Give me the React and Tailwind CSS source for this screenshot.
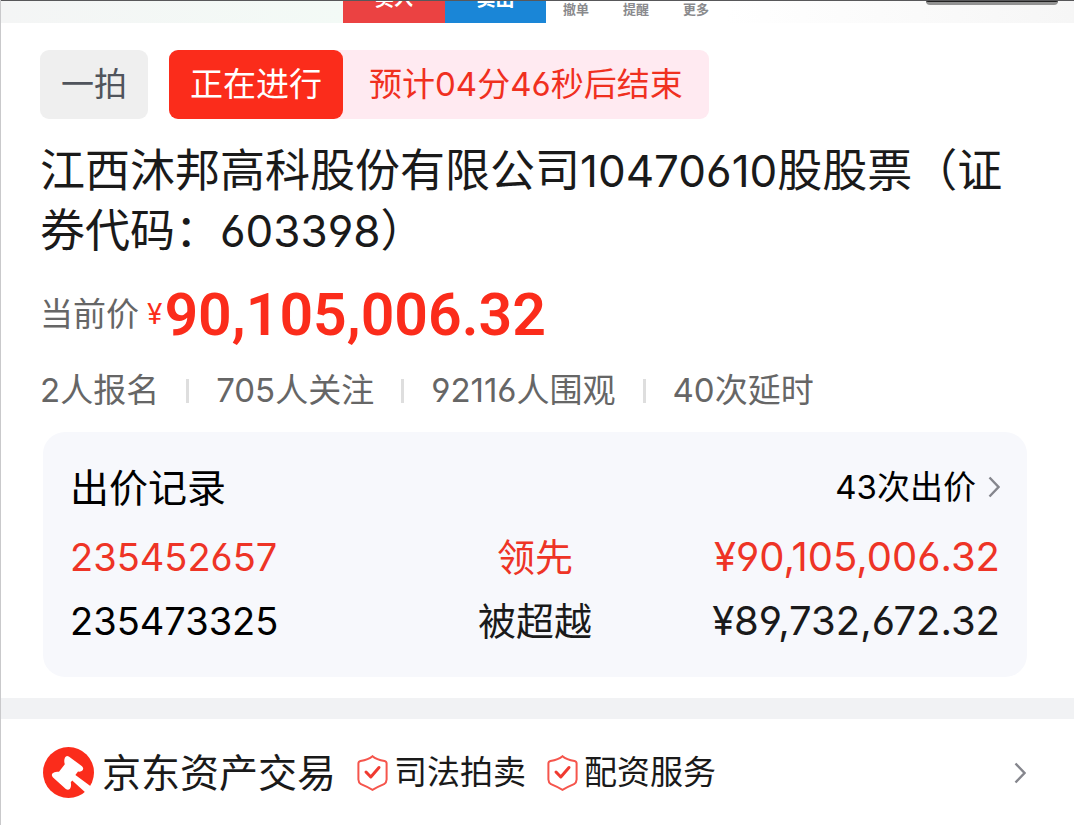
import React from 'react';

const bids = [
  { bidder: '235452657', status: '领先', price: '¥90,105,006.32', leading: true },
  { bidder: '235473325', status: '被超越', price: '¥89,732,672.32', leading: false },
];

const stats = ['2人报名', '705人关注', '92116人围观', '40次延时'];

const services = ['司法拍卖', '配资服务'];

const GavelLogo = () => (
  <svg viewBox="0 0 51 51" className="size-[51px] shrink-0" aria-hidden="true">
    <circle cx="25.5" cy="25.5" r="25.5" fill="#fb2c1b" />
    <path
      d="M22 10.5Q23.3 8 25.8 9.4L39 19.2Q41.2 21.4 39.4 23.6Q38 25 35 24.5L32.4 28L48 39.6L43 46L29.2 33.4L27.8 35.2Q28.6 39.6 27 41.8Q25.2 43.6 22.8 42L9.8 30.2Q8 28.2 9.6 26.2Q11.6 24.2 16 24.8L21.8 17.2Q20.6 13.4 22 10.5Z"
      fill="#fff"
    />
  </svg>
);

const ShieldCheck = () => (
  <svg viewBox="0 0 31 36" className="h-9 w-[31px] shrink-0" fill="none" aria-hidden="true">
    <path
      d="M15.5 1.2Q19.5 4.6 27.5 6Q29.6 6.4 29.6 8.6V24.5Q29.6 27.4 27 29.2Q20.5 32 15.5 34.8Q10.5 32 4 29.2Q1.4 27.4 1.4 24.5V8.6Q1.4 6.4 3.5 6Q11.5 4.6 15.5 1.2Z"
      stroke="#f5554c"
      strokeWidth="2"
    />
    <path d="M9 17L13.8 22L22 12.5" stroke="#f03a30" strokeWidth="3" strokeLinecap="round" strokeLinejoin="round" />
  </svg>
);

const Chevron = () => (
  <svg viewBox="0 0 12 22" className="h-[22px] w-3 shrink-0" fill="none" stroke="#85868d" strokeWidth="2.4" aria-hidden="true">
    <path d="M1.5 1.5L10.5 11L1.5 20.5" />
  </svg>
);

// Bottom edge of the product image, cut off by the scroll position
const ImageStrip = () => (
  <div className="relative flex h-[23px] items-end overflow-hidden border-t border-[#58585a] bg-white">
    <div className="h-full w-[342px] bg-linear-to-r from-[#f4f5f5] to-[#f3faf6]" />
    <button type="button" className="h-12 w-[102px] shrink-0 bg-[#eb4242] text-[19px] font-bold text-white">买入</button>
    <button type="button" className="h-12 w-[101px] shrink-0 bg-[#1a86d7] text-[19px] font-bold text-white">卖出</button>
    {['撤单', '提醒', '更多'].map((label) => (
      <button key={label} type="button" className="h-7 w-15 shrink-0 text-[13px] font-bold text-[#8a8a8d]">
        {label}
      </button>
    ))}
    <div className="h-full flex-1 bg-linear-to-r from-white to-[#f6f6f6]" />
    <div className="absolute top-0 right-4 h-1 w-33 rounded-b-md border-b-3 border-[#929292] bg-[#222]" />
  </div>
);

const BidRecords = () => (
  <section className="ml-[3px] rounded-[22px] bg-[#f7f8fc] pt-[17px] pr-[27px] pb-6 pl-[27px]">
    <div className="flex h-19 items-center justify-between">
      <h2 className="text-[39px] text-black">出价记录</h2>
      <a href="#bids" className="flex items-center gap-3 text-[33px] text-black">
        43次出价
        <Chevron />
      </a>
    </div>
    <table className="w-full table-fixed text-[38px]">
      <tbody>
        {bids.map((bid) => (
          <tr key={bid.bidder} className={bid.leading ? 'h-16 text-[#ee3426]' : 'h-16 text-[#1a1a1a]'}>
            <td className={bid.leading ? 'p-0 text-left' : 'p-0 text-left text-black'}>{bid.bidder}</td>
            <td className="p-0 text-center">{bid.status}</td>
            <td className="p-0 text-right text-[40px]">{bid.price}</td>
          </tr>
        ))}
      </tbody>
    </table>
  </section>
);

const App = () => {
  return (
    <div className="border-l border-[#c9c9cb] bg-white font-['Inter','Noto_Sans_CJK_SC',sans-serif] leading-none whitespace-nowrap text-[#1a1a1a] [font-feature-settings:'cv03','cv04']">
      <ImageStrip />

      <main className="pt-[27px] pr-[47px] pb-[21px] pl-[39px]">
        {/* Auction state */}
        <div className="flex gap-[21px] text-[33px]">
          <span className="flex h-[69px] w-27 items-center justify-center rounded-[9px] bg-[#efefef] text-[#50545c]">一拍</span>
          <div className="flex h-[69px] rounded-[9px] bg-[#ffeaf1]">
            <span className="flex w-[174px] items-center justify-center rounded-[9px] bg-[#fb2c1b] text-white">正在进行</span>
            <span className="flex items-center px-[26px] text-[#f0301f]">预计04分46秒后结束</span>
          </div>
        </div>

        <h1 className="mt-[22px] text-[45px] leading-15 whitespace-normal">
          江西沐邦高科股份有限公司<span className="text-[44px]">10470610</span>股股票（证券代码：<span className="text-[44px]">603398</span>）
        </h1>

        {/* Current price */}
        <div className="mt-[3px] flex h-25 items-center text-[#666]">
          <span className="text-[33px]">当前价</span>
          <span className="ml-2 text-[28px] text-[#fb2c1b]">¥</span>
          <span className="ml-0.5 font-['Roboto',sans-serif] text-[59px] font-semibold text-[#fb2c1b]">90,105,006.32</span>
        </div>

        <div className="mb-[15px] flex h-[53px] items-center gap-[27px] text-[33px] text-[#666]">
          {stats.map((stat, i) => (
            <React.Fragment key={stat}>
              {i > 0 && <span className="h-6 w-[3px] bg-[#dedede]" />}
              <span>{stat}</span>
            </React.Fragment>
          ))}
        </div>

        <BidRecords />
      </main>

      <div className="h-[21px] bg-[#f1f2f4]" />

      <a href="#shop" className="flex h-[107px] items-center pr-12 pl-[42px]">
        <GavelLogo />
        <span className="ml-2 text-[39px]">京东资产交易</span>
        {services.map((service) => (
          <span key={service} className="ml-[21px] flex items-center gap-1.5 text-[33px]">
            <ShieldCheck />
            {service}
          </span>
        ))}
        <span className="ml-auto">
          <Chevron />
        </span>
      </a>
    </div>
  );
};

export default App;
